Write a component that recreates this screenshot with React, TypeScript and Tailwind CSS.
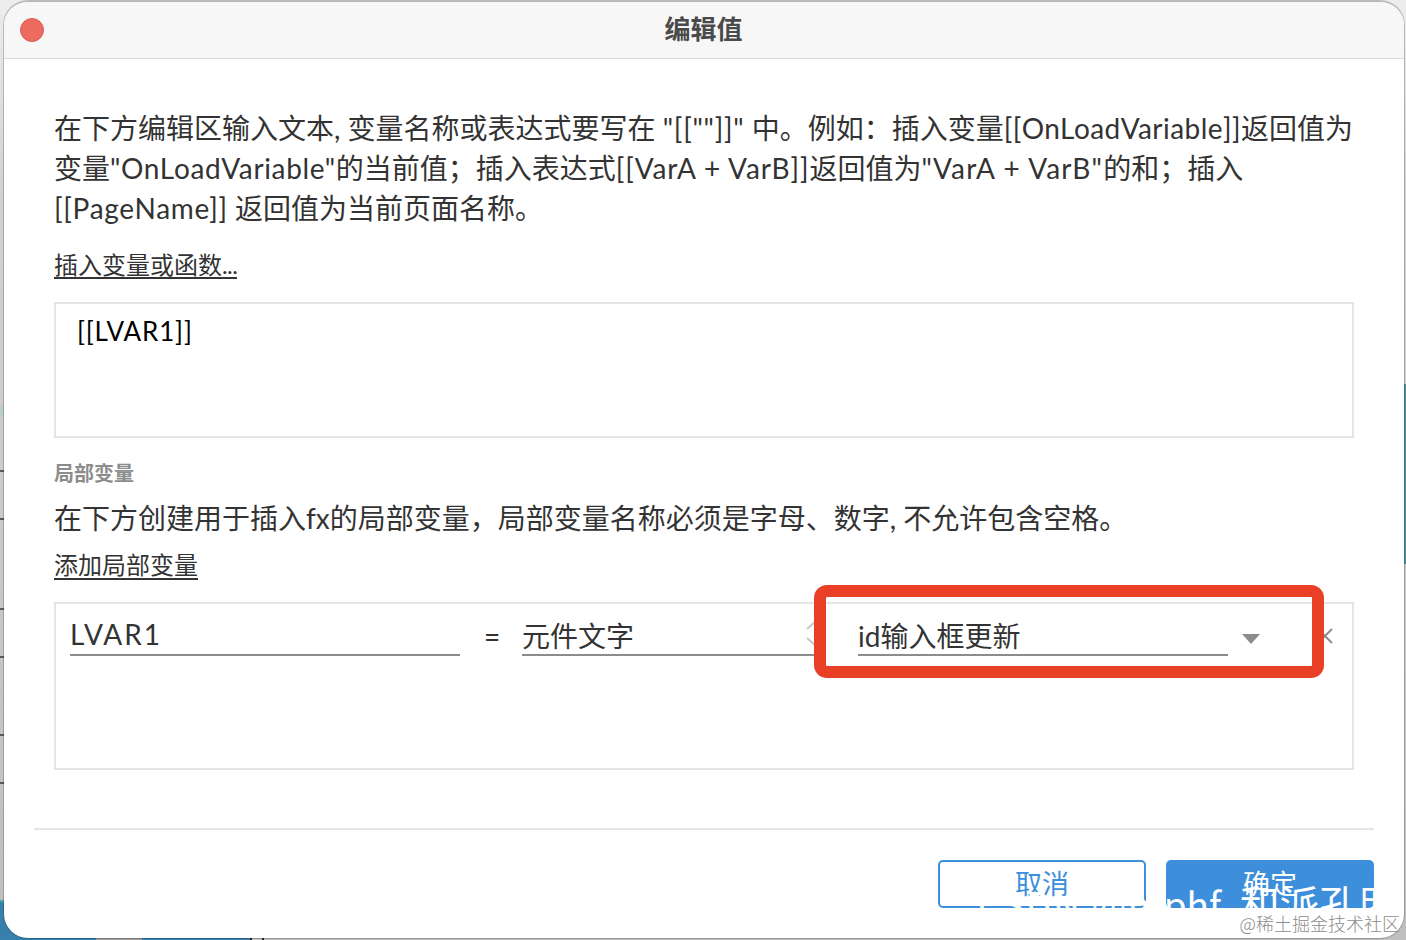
const latin = "font-['Lato','Noto_Sans_CJK_SC',sans-serif]";

// Left-hand rules of the canvas that shows behind the dialog
const rulerMarks = [470, 518, 608, 656, 734, 782];

function Field({ children, className }: { children: React.ReactNode; className: string }) {
    return (
        <div className={`h-[42px] border-b-2 border-[#8c8c8c] text-[28px] whitespace-nowrap ${className}`}>
            {children}
        </div>
    );
}

function Backdrop() {
    return (
        <div className="absolute inset-0 bg-linear-to-b from-[#ededed] via-[#d2d2d2] via-20% to-[#bfbfbf]">
            {rulerMarks.map((top) => (
                <div key={top} className="absolute left-0 h-[2px] w-1 bg-[#5a5a5a]" style={{ top }} />
            ))}
            <div className="absolute top-[406px] left-0 h-[9px] w-1 bg-[#b8cfc8]" />
            <div className="absolute top-[900px] left-0 h-10 w-[250px] bg-[#3780ae]" />
            <div className="absolute top-[900px] left-0 h-[2px] w-1 bg-[#4fa5ad]" />
            <div className="absolute top-[938px] left-[96px] h-[2px] w-[46px] bg-[#9b9b9b]" />
            <div className="absolute top-[938px] left-[250px] h-[2px] w-[2px] bg-[#222]" />
            <div className="absolute top-[938px] left-[262px] h-[2px] w-[2px] bg-[#222]" />
            <div className="absolute top-[384px] right-0 h-[180px] w-[3px] bg-[#4a9295]" />
        </div>
    );
}

export default function App() {
    return (
        <div className={`relative h-[940px] w-[1406px] overflow-hidden text-[#333] ${latin}`}>
            <Backdrop />

            <div className="relative ml-1 flex h-[937px] w-[1400px] flex-col overflow-hidden rounded-[24px] border-t border-[#b5b5b5] bg-white mt-px shadow-[0_0_0_1px_rgba(0,0,0,0.2)]">
                <header className="flex h-[57px] shrink-0 items-center border-b border-[#d9d9d9] bg-[#f7f7f7] pl-4">
                    <div className="h-6 w-6 rounded-full border border-[#dc5d54] bg-[#ed6a5e]" />
                    <h1 className="-ml-[41px] flex-1 pb-[3px] text-center text-[26px] leading-[38px] font-bold text-[#4a4a4a]">编辑值</h1>
                </header>

                <main className="flex flex-col px-[50px] pt-[49px]">
                    <div className="text-[28px] leading-[40px] whitespace-nowrap">
                        <p>
                            在下方编辑区输入文本, 变量名称或表达式要写在 <span className="tracking-[0.75px]">"[[""]]"</span>{" "}
                            中。例如：插入变量<span className="tracking-[0.45px]">[[OnLoadVariable]]</span>返回值为
                        </p>
                        <p>
                            变量<span className="tracking-[0.66px]">"OnLoadVariable"</span>的当前值；插入表达式
                            <span className="tracking-[0.9px]">[[VarA + VarB]]</span>返回值为
                            <span className="tracking-[1.15px]">"VarA + VarB"</span>的和；插入
                        </p>
                        <p>
                            <span className="tracking-[0.72px]">[[PageName]]</span> 返回值为当前页面名称。
                        </p>
                    </div>

                    <a className="mt-[19px] self-start border-b-2 border-[#333] pt-[6px] text-[24px] leading-[24px]">
                        插入变量或函数<span className="tracking-[-0.6px]">...</span>
                    </a>

                    <div className="mt-[23px] h-[136px] border-2 border-[#e5e5e5] px-[21px] pt-[9px] text-[26px] leading-[36px] tracking-[0.85px] text-black">
                        [[LVAR1]]
                    </div>

                    <h2 className="mt-[20px] text-[20px] leading-[30px] font-bold text-[#8c8c8c]">局部变量</h2>
                    <p className="mt-[10px] text-[28px] leading-[40px] whitespace-nowrap">
                        在下方创建用于插入fx的局部变量，局部变量名称必须是字母、数字, 不允许包含空格。
                    </p>
                    <a className="mt-[11px] self-start border-b-2 border-[#333] pt-[3px] text-[24px] leading-[26px]">添加局部变量</a>

                    <div className="relative mt-[22px] flex h-[168px] border-2 border-[#e5e5e5] pt-[10px] pl-[14px]">
                        <Field className="w-[390px] leading-[40px] tracking-[2px]">LVAR1</Field>
                        <span className="mt-[4px] w-[62px] pl-6 text-[28px] leading-[36px]">=</span>
                        <Field className="w-[296px] leading-[45px]">元件文字</Field>
                        <Field className="ml-[40px] w-[370px] leading-[45px]">id输入框更新</Field>
                        <svg className="mt-[19px] ml-[14px] h-[12px] w-[18px] fill-[#8c8c8c]" viewBox="0 0 18 12">
                            <path d="M0 1h18L9 11z" />
                        </svg>
                        <svg className="absolute top-[14px] left-[749px] h-8 w-6 fill-none stroke-[#c8c8c8] stroke-2" viewBox="0 0 24 32">
                            <path d="M2 11l9-8 9 8M2 20l9 8 9-8" />
                        </svg>
                        <svg className="absolute top-[24px] left-[1261px] h-4 w-4 fill-none stroke-[#8c8c8c] stroke-2" viewBox="0 0 16 16">
                            <path d="M1 1l14 14M15 1L1 15" />
                        </svg>
                        <div className="absolute top-[-19px] left-[758px] h-[93px] w-[510px] rounded-[13px] border-[#e93f26] border-x-[12px] border-y-[12px]" />
                    </div>
                </main>

                <footer className="mx-[30px] mt-[58px] flex justify-end gap-5 border-t-2 border-[#e5e5e5] pt-[30px] text-[27px] leading-[42px]">
                    <button className="h-12 w-[208px] rounded-[5px] border-2 border-[#3d8fdb] pb-px text-[#3d8fdb]">取消</button>
                    <button className="h-12 w-[208px] rounded-[5px] bg-[#3d8fdb] pb-px text-white">确定</button>
                </footer>
            </div>

            <div className="absolute top-[877px] left-[978px] flex items-baseline font-['Noto_Sans_CJK_SC',sans-serif] text-[37px] leading-[50px] whitespace-pre text-white">
                <span className="tracking-[1.6px]">CSDN @m</span>
                <span className="w-[76px]">phf</span>
                <span className="text-[40px]">和派孔明</span>
            </div>
            <div className="absolute top-[909px] right-[6px] font-['Noto_Sans_CJK_SC',sans-serif] text-[18px] leading-[28px] font-light whitespace-nowrap text-[#8c8c8c]">
                @稀土掘金技术社区
            </div>
        </div>
    );
}
